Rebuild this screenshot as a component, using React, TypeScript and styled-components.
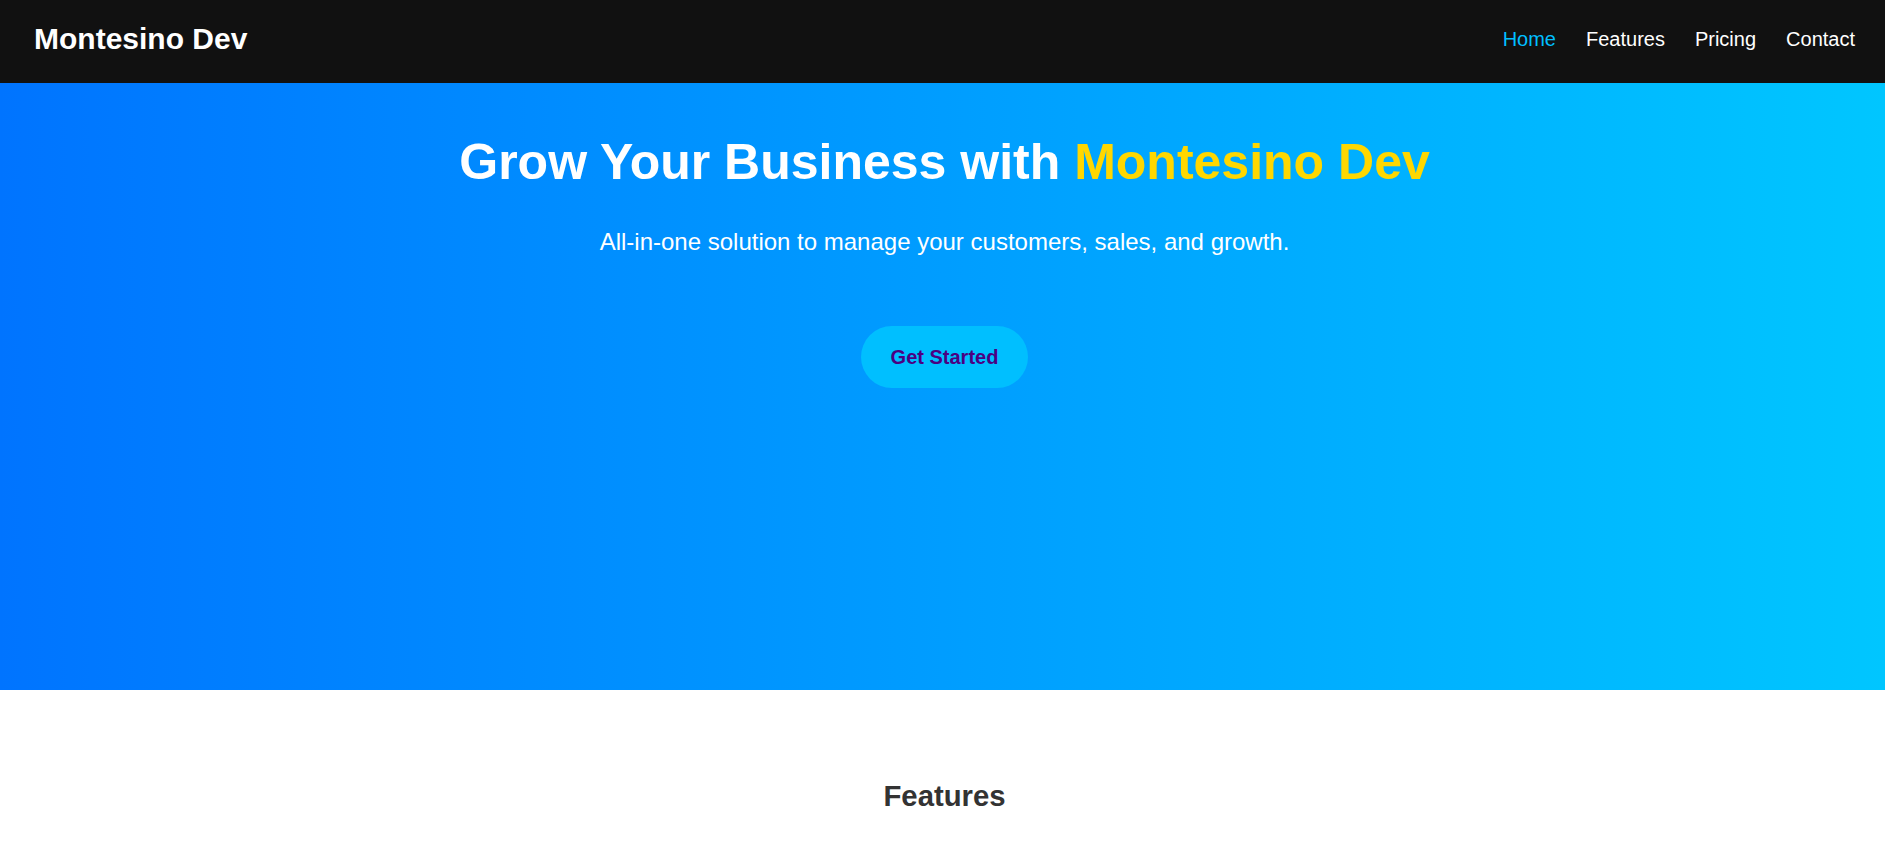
import React from "react";
import styled, { createGlobalStyle } from "styled-components";

const GlobalStyle = createGlobalStyle`
  * {
    box-sizing: border-box;
  }
  body {
    margin: 0;
    font-family: "Liberation Sans", Arial, sans-serif;
    background: #fff;
    color: #333;
  }
`;

const Page = styled.div`
  min-height: 100vh;
  display: flex;
  flex-direction: column;
`;

// Top navigation bar
const Navbar = styled.nav`
  height: 83px;
  padding: 0 30px 5px 34px;
  background: #111111;
  display: flex;
  align-items: center;
  justify-content: space-between;
`;

const Logo = styled.div`
  color: #fff;
  font-size: 30px;
  font-weight: 700;
`;

const NavLinks = styled.ul`
  list-style: none;
  margin: 0;
  padding: 0;
  display: flex;
  gap: 30px;
`;

const NavLink = styled.a<{ $active?: boolean }>`
  color: ${({ $active }) => ($active ? "#00bfff" : "#fff")};
  font-size: 20px;
  text-decoration: none;
  cursor: pointer;
`;

// Hero
const Hero = styled.section`
  height: 607px;
  padding: 50px 20px 0 24px;
  background: linear-gradient(90deg, #0074ff, #00c6ff);
  display: flex;
  flex-direction: column;
  align-items: center;
  text-align: center;
  color: #fff;
`;

const Title = styled.h1`
  margin: 0;
  font-size: 50px;
  font-weight: 700;
`;

const Highlight = styled.span`
  color: #ffd700;
`;

const Subtitle = styled.p`
  margin: 37px 0 0;
  font-size: 24px;
`;

const CtaButton = styled.button`
  margin-top: 70px;
  height: 62px;
  padding: 0 30px;
  border: none;
  border-radius: 31px;
  background: #00bfff;
  color: #4b0082;
  font-family: inherit;
  font-size: 20px;
  font-weight: 700;
  cursor: pointer;
`;

// Features
const Features = styled.section`
  padding: 89px 20px 60px 24px;
  text-align: center;
`;

const SectionTitle = styled.h2`
  margin: 0;
  font-size: 29.3px;
  font-weight: 700;
  color: #333;
`;

const links = ["Home", "Features", "Pricing", "Contact"];

export default function App() {
  return (
    <Page>
      <GlobalStyle />
      <Navbar>
        <Logo>Montesino Dev</Logo>
        <NavLinks>
          {links.map((l, i) => (
            <li key={l}>
              <NavLink $active={i === 0}>{l}</NavLink>
            </li>
          ))}
        </NavLinks>
      </Navbar>
      <Hero>
        <Title>
          Grow Your Business with <Highlight>Montesino Dev</Highlight>
        </Title>
        <Subtitle>All-in-one solution to manage your customers, sales, and growth.</Subtitle>
        <CtaButton>Get Started</CtaButton>
      </Hero>
      <Features>
        <SectionTitle>Features</SectionTitle>
      </Features>
    </Page>
  );
}
